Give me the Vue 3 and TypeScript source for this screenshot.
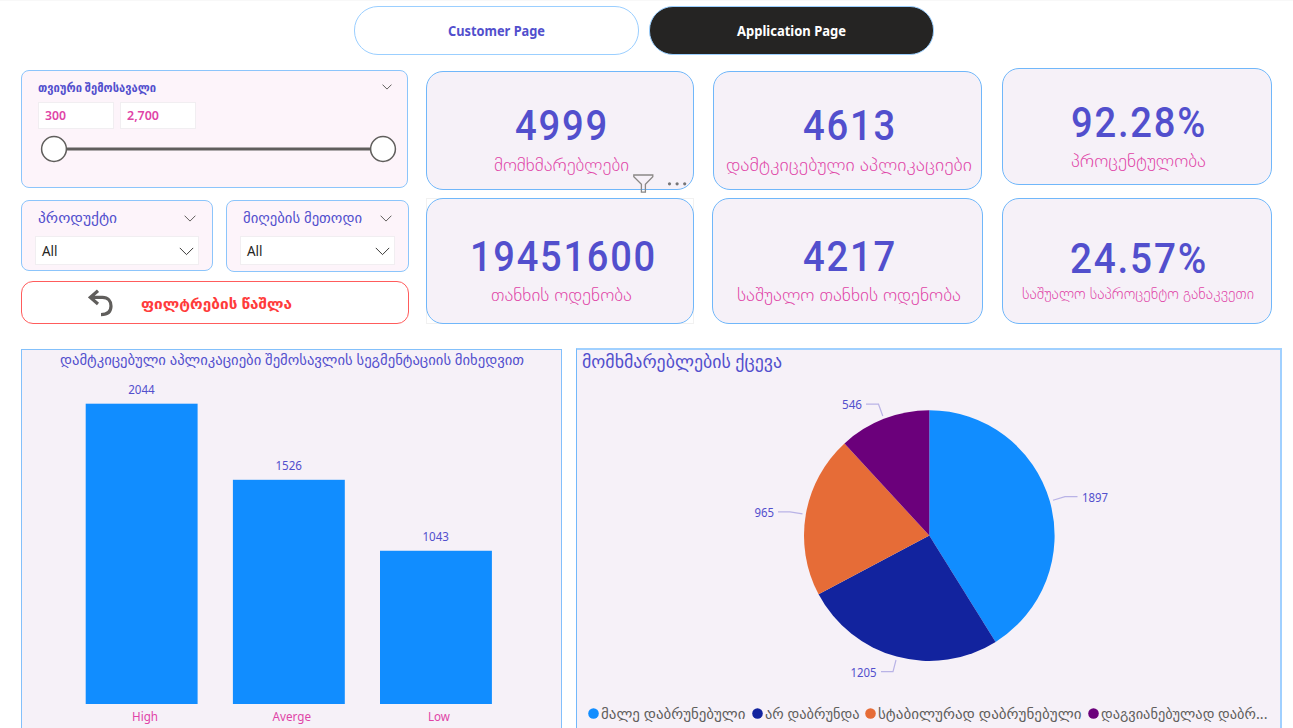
<script setup lang="ts">
import { h } from 'vue'

interface FitProps { text: string; w: number; size: number; box: number }

// Single line of text fitted to a fixed width; its baseline is the bottom of the box.
const FitText = (p: FitProps) =>
  h('svg', { class: 'fit', width: p.w, height: p.box, style: { overflow: 'visible', display: 'block', flex: 'none' } }, [
    h('text', { x: 0, y: p.box, 'font-size': p.size, textLength: p.w, lengthAdjust: 'spacingAndGlyphs', fill: 'currentColor' }, p.text),
  ])
FitText.props = ['text', 'w', 'size', 'box']

interface Card { cls: string; value: string; vw: number; label: string; lw: number; size: number }

const columns: Card[][] = [
  [
    { cls: 'a1', value: '4999', vw: 94, label: 'მომხმარებლები', lw: 135, size: 16.5 },
    { cls: 'a2', value: '19451600', vw: 187, label: 'თანხის ოდენობა', lw: 141, size: 16.5 },
  ],
  [
    { cls: 'b1', value: '4613', vw: 94, label: 'დამტკიცებული აპლიკაციები', lw: 246, size: 16.5 },
    { cls: 'b2', value: '4217', vw: 94, label: 'საშუალო თანხის ოდენობა', lw: 224, size: 16.5 },
  ],
  [
    { cls: 'c1', value: '92.28%', vw: 136, label: 'პროცენტულობა', lw: 135, size: 16.5 },
    { cls: 'c2', value: '24.57%', vw: 138, label: 'საშუალო საპროცენტო განაკვეთი', lw: 232, size: 14.5 },
  ],
]

const bars = [
  { name: 'High', value: 2044, x: 85.7, nx: 132, nw: 26 },
  { name: 'Averge', value: 1526, x: 232.9, nx: 272.5, nw: 38.5 },
  { name: 'Low', value: 1043, x: 380, nx: 428, nw: 22 },
]
const barHeight = (v: number) => (v / 2044) * 300.3

const cx = 929.3
const cy = 535.6
const r = 125.3
const parts = [
  { value: 1897, color: '#118dff' },
  { value: 1205, color: '#12239e' },
  { value: 965, color: '#e66c37' },
  { value: 546, color: '#6b007b' },
]
const total = parts.reduce((s, p) => s + p.value, 0)
let acc = 0
const slices = parts.map((p) => {
  const a = (acc / total) * Math.PI * 2
  acc += p.value
  const b = (acc / total) * Math.PI * 2
  const pt = (t: number) => `${(cx + r * Math.sin(t)).toFixed(2)} ${(cy - r * Math.cos(t)).toFixed(2)}`
  return { color: p.color, d: `M${cx} ${cy}L${pt(a)}A${r} ${r} 0 ${b - a > Math.PI ? 1 : 0} 1 ${pt(b)}Z` }
})
const callouts = [
  { value: 1897, x: 1082, y: 502, w: 26, line: '1053,500.3 1065,496.6 1077.5,496.6' },
  { value: 1205, x: 850.5, y: 677, w: 26, line: '896,660 893,671.7 881,671.7' },
  { value: 965, x: 754.5, y: 517, w: 19.5, line: '802.5,513.8 790,511.8 778,511.8' },
  { value: 546, x: 842, y: 409, w: 20, line: '882.8,416 878.5,404.2 866,404.2' },
]
const legend = [
  { color: '#118dff', text: 'მალე დაბრუნებული', w: 144.5 },
  { color: '#12239e', text: 'არ დაბრუნდა', w: 94.5 },
  { color: '#e66c37', text: 'სტაბილურად დაბრუნებული', w: 203.5 },
  { color: '#6b007b', text: 'დაგვიანებულად დაბრ...', w: 166.5 },
]
</script>

<template>
  <div class="page">
    <nav class="tabs">
      <button class="tab"><FitText text="Customer Page" :w="97" :size="14" :box="10" /></button>
      <button class="tab active"><FitText text="Application Page" :w="109" :size="14" :box="10" /></button>
    </nav>

    <div class="top">
      <section class="filters">
        <div class="filter income">
          <header class="head">
            <FitText class="bold" text="თვიური შემოსავალი" :w="118" :size="12" :box="8" />
            <svg class="chev" width="10" height="6" viewBox="0 0 10 6"><path d="M.5.6 5 5.1 9.5.6" /></svg>
          </header>
          <div class="inputs">
            <div class="num"><FitText text="300" :w="21" :size="12.5" :box="9" /></div>
            <div class="num"><FitText text="2,700" :w="32" :size="12.5" :box="9" /></div>
          </div>
          <svg class="slider" width="356" height="28" viewBox="0 0 356 28">
            <path d="M14 14H343" stroke="#605e5c" stroke-width="3.2" />
            <circle cx="14" cy="14" r="12.4" />
            <circle cx="343" cy="14" r="12.4" />
          </svg>
        </div>
        <div class="pair">
          <div class="filter product">
            <header class="head">
              <FitText text="პროდუქტი" :w="79" :size="14" :box="8" />
              <svg class="chev" width="12" height="7" viewBox="0 0 12 7"><path d="M.6.7 6 6.1 11.4.7" /></svg>
            </header>
            <div class="select">
              <FitText text="All" :w="15.5" :size="14" :box="10" />
              <svg class="arrow" width="15" height="9" viewBox="0 0 15 9"><path d="M.8.9 7.5 7.6 14.2.9" /></svg>
            </div>
          </div>
          <div class="filter method">
            <header class="head">
              <FitText text="მიღების მეთოდი" :w="119" :size="14" :box="8" />
              <svg class="chev" width="12" height="7" viewBox="0 0 12 7"><path d="M.6.7 6 6.1 11.4.7" /></svg>
            </header>
            <div class="select">
              <FitText text="All" :w="15.5" :size="14" :box="10" />
              <svg class="arrow" width="15" height="9" viewBox="0 0 15 9"><path d="M.8.9 7.5 7.6 14.2.9" /></svg>
            </div>
          </div>
        </div>
        <button class="reset">
          <svg class="undo" width="26" height="28" viewBox="0 0 26 28"><path d="M10 1.8 2.4 8.4 10 15M2.6 8.4H14.5C20 8.4 23 12 23 17C23 22.5 19.5 25.6 13 25.6" /></svg>
          <FitText class="bold" text="ფილტრების წაშლა" :w="151" :size="13.5" :box="8" />
        </button>
      </section>

      <section v-for="(col, i) in columns" :key="i" class="col" :class="'col' + i">
        <div v-for="c in col" :key="c.cls" class="slot" :class="c.cls">
          <article class="card">
            <FitText class="value" :text="c.value" :w="c.vw" :size="43.4" :box="31" />
            <FitText class="label" :text="c.label" :w="c.lw" :size="c.size" :box="10" />
          </article>
          <svg v-if="c.cls === 'a1'" class="tools" width="56" height="20" viewBox="0 0 56 20">
            <path d="M.8 1H19.8V2.8L12.4 10.2V18.2H8.4V10.2L.8 2.8Z" fill="none" stroke="#8a8886" stroke-width="1.3" />
            <g fill="#767577"><circle cx="36.5" cy="9.8" r="1.6" /><circle cx="44.1" cy="9.8" r="1.6" /><circle cx="51.7" cy="9.8" r="1.6" /></g>
          </svg>
        </div>
      </section>
    </div>

    <div class="charts">
      <section class="panel barpanel">
        <svg width="538" height="378" viewBox="22 350 538 378">
          <text class="title" x="60" y="365" font-size="14" textLength="464" lengthAdjust="spacingAndGlyphs">დამტკიცებული აპლიკაციები შემოსავლის სეგმენტაციის მიხედვით</text>
          <g v-for="b in bars" :key="b.name">
            <rect :x="b.x" :y="704 - barHeight(b.value)" width="111.9" :height="barHeight(b.value)" fill="#118dff" />
            <text class="title" :x="b.x + 42.5" :y="694 - barHeight(b.value)" font-size="12" textLength="26.5" lengthAdjust="spacingAndGlyphs">{{ b.value }}</text>
            <text class="axis" :x="b.nx" y="721" font-size="12" :textLength="b.nw" lengthAdjust="spacingAndGlyphs">{{ b.name }}</text>
          </g>
        </svg>
      </section>
      <section class="panel piepanel">
        <svg width="703" height="356" viewBox="577 350 703 356">
          <text class="title" x="582" y="368" font-size="17.5" textLength="200" lengthAdjust="spacingAndGlyphs">მომხმარებლების ქცევა</text>
          <path v-for="s in slices" :key="s.color" :d="s.d" :fill="s.color" />
          <g v-for="c in callouts" :key="c.value">
            <polyline :points="c.line" fill="none" stroke="#b9b3e6" stroke-width="1.2" />
            <text class="title" :x="c.x" :y="c.y" font-size="12" :textLength="c.w" lengthAdjust="spacingAndGlyphs">{{ c.value }}</text>
          </g>
        </svg>
        <div class="legend">
          <div v-for="l in legend" :key="l.color" class="item">
            <svg width="11" height="11" viewBox="0 0 11 11"><circle cx="5.5" cy="5.5" r="5.3" :fill="l.color" /></svg>
            <FitText :text="l.text" :w="l.w" :size="14" :box="8" />
          </div>
        </div>
      </section>
    </div>
  </div>
</template>

<style>
body { margin: 0; background: #fff; }
</style>

<style scoped>
.page {
  width: 1293px;
  height: 728px;
  overflow: hidden;
  box-sizing: border-box;
  border-top: 1px solid #f8f8f8;
  background: #fff;
  color: #524fcd;
  font-family: "Noto Sans", "DejaVu Sans", sans-serif;
}
.page * { box-sizing: border-box; }
button { padding: 0; font: inherit; color: inherit; background: #fff; }
.tabs { display: flex; gap: 10px; padding: 5px 0 0 354px; height: 67px; }
.tab {
  width: 285px;
  height: 49px;
  display: flex;
  align-items: center;
  justify-content: center;
  border: 1px solid #9bcfff;
  border-radius: 24px;
  font-weight: 700;
}
.tab.active { background: #252423; color: #fff; }
.top { display: flex; height: 256px; padding-left: 21px; }
.filters { width: 388px; margin-right: 17px; padding-top: 2px; }
.filter { border: 1px solid #8cc5fb; border-radius: 8px; background: #fdf4fa; }
.income { width: 387px; height: 118px; padding: 13px 15px 0 16px; }
.head { display: flex; justify-content: space-between; align-items: flex-start; }
.chev path, .arrow path { fill: none; stroke: #605e5c; stroke-width: 1; }
.arrow path { stroke: #3b3a39; }
.chev { flex: none; }
.bold { font-weight: 700; }
.inputs { display: flex; gap: 6px; margin-top: 10px; }
.num {
  width: 76px;
  height: 27px;
  padding: 8px 0 0 6px;
  border: 1px solid #f1eef1;
  background: #fff;
  color: #e044a7;
  font-weight: 600;
}
.slider { display: block; margin: 6px 0 0 2px; overflow: visible; }
.slider circle { fill: #fff; stroke: #605e5c; stroke-width: 1.5; }
.pair { display: flex; gap: 13px; margin-top: 12px; }
.product { width: 193px; height: 71px; padding: 14px 16px 0; }
.method { width: 183px; height: 72px; padding: 14px 16px 0; }
.select {
  height: 29px;
  margin: 13px -3px 0;
  padding: 1px 4px 0 6px;
  display: flex;
  align-items: center;
  justify-content: space-between;
  border: 1px solid #f1eef1;
  background: #fff;
  color: #252423;
}
.reset {
  width: 388px;
  height: 43px;
  margin-top: 9px;
  display: flex;
  align-items: center;
  padding-left: 66px;
  border: 1px solid #ff5c5c;
  border-radius: 12px;
  color: #ff3b3b;
}
.undo { margin: 1px 27px 0 0; }
.undo path { fill: none; stroke: #605e5c; stroke-width: 3.2; }
.reset .fit { margin-top: 4px; }
.col { display: flex; flex-direction: column; justify-content: space-between; }
.col0 { width: 268px; margin-right: 18px; padding-top: 3px; }
.col1 { width: 271px; margin-right: 19px; padding-top: 3px; }
.col2 { width: 270px; }
.slot { position: relative; }
.card {
  height: 100%;
  display: flex;
  flex-direction: column;
  align-items: center;
  border: 1px solid #70b7fa;
  border-radius: 17px;
  background: #f6f1f8;
}
.a1, .b1 { height: 119px; }
.b1 { margin: 0 1px; }
.c1 { height: 117px; }
.a2, .b2, .c2 { height: 126px; }
.a2 { box-shadow: inset 0 0 0 1px #f1f1f1; }
.value { font-family: Roboto, sans-serif; font-weight: 500; letter-spacing: 2px; margin: 37px 0 0 4px; }
.label { color: #e044a7; font-weight: 300; margin: 21px 0 0 2px; }
.c1 .value { margin-top: 37px; }
.c1 .label { margin-top: 20px; }
.a2 .value, .b2 .value { margin-top: 41px; }
.a2 .value { margin-left: 6px; }
.a2 .label, .b2 .label { margin-top: 20px; }
.c2 .value { margin-top: 43px; }
.c2 .label { margin-top: 16px; }
.tools { position: absolute; left: 207px; top: 103px; }
.charts { display: flex; align-items: flex-start; margin-top: 24px; padding-left: 21px; }
.panel { border: 1px solid #83c0fb; background: #f6f1f8; overflow: hidden; }
.panel svg { display: block; }
.barpanel { width: 541px; height: 400px; margin: 1px 14px 0 0; }
.piepanel { width: 706px; height: 401px; border-width: 2px; border-color: #a0d0ff; border-left: 1px solid #73b8fb; }
.title { fill: #524fcd; }
.axis { fill: #e044a7; }
.legend { display: flex; gap: 6px; padding: 2px 0 0 11px; color: #605e5c; }
.item { display: flex; align-items: center; gap: 2px; }
.item .fit { margin-top: 2px; }
</style>
